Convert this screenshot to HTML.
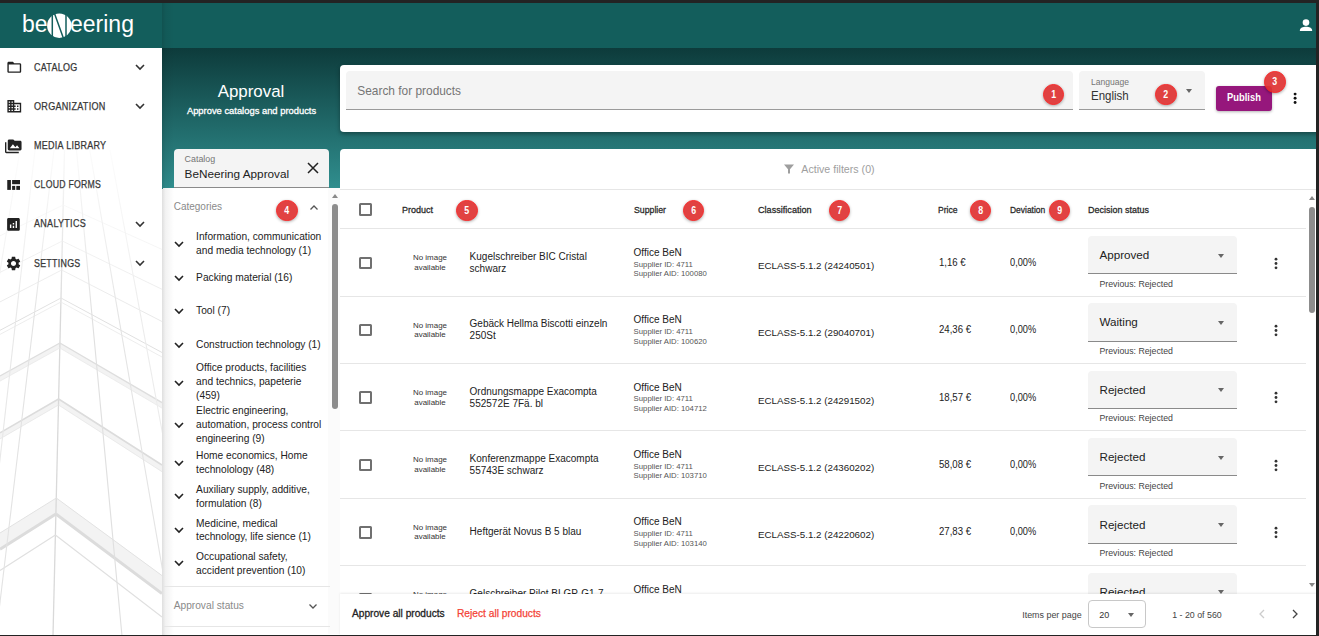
<!DOCTYPE html><html><head><meta charset="utf-8"><style>
*{box-sizing:border-box}
html,body{margin:0;padding:0;width:1319px;height:636px;overflow:hidden;background:#232323;font-family:"Liberation Sans",sans-serif}
#app{position:absolute;left:0;top:0;width:1316px;height:634.6px;overflow:hidden;background:#fff}
.t{position:absolute;white-space:nowrap}
.ic{position:absolute;line-height:0}
#hdr{position:absolute;left:0;top:0;width:1316px;height:48px;background:#135e5c;border-top:3px solid #232323}
#side{position:absolute;left:0;top:48px;width:162px;height:590px;background:#fff}
#sideedge{position:absolute;left:162px;top:3px;width:12px;height:632px;background:linear-gradient(to right,rgba(0,0,0,.13),rgba(0,0,0,.05) 30%,rgba(0,0,0,0))}
#grad{position:absolute;left:162px;top:48px;width:1154px;height:141px;background:linear-gradient(to bottom,#0d3b3b 0%,#308f8f 100%)}
#scard{position:absolute;left:340.3px;top:64.8px;width:990px;height:67px;background:#fff;border-radius:4px;box-shadow:0 2px 4px rgba(0,0,0,.35)}
.fill{position:absolute;background:#f4f4f4;border-radius:4px 4px 0 0;border-bottom:1px solid #9a9a9a}
.tri{position:absolute;width:0;height:0;border-left:3.6px solid transparent;border-right:3.6px solid transparent;border-top:4.2px solid #666}
#publish{position:absolute;left:1215.9px;top:85.8px;width:56.4px;height:25.1px;background:#96177c;border-radius:3px;box-shadow:0 1px 3px rgba(0,0,0,.3)}
.dot{position:absolute;width:2.8px;height:2.8px;border-radius:50%;background:#111}
.badge{position:absolute;border-radius:50%;background:#df3434;box-shadow:0 1px 3px rgba(0,0,0,.35);border:1.3px solid #fb1c1c;opacity:.93}
.badge span{position:absolute;left:0;right:0;top:3px;text-align:center;color:#fff;font-size:11px;line-height:13px;font-weight:bold;transform:scaleX(0.8)}
#lower{position:absolute;left:163px;top:188px;width:1153px;height:446px;background:#fff}
#fcard{position:absolute;left:340.3px;top:148.6px;width:980px;height:41px;background:#fff;border-radius:4px 4px 0 0}
.hline{position:absolute;height:1px;background:#e6e6e6}
.cb{position:absolute;width:12.5px;height:12.5px;border:2px solid #707070;border-radius:1.5px}
.stri{position:absolute;width:0;height:0;border-left:3.6px solid transparent;border-right:3.6px solid transparent;border-bottom:4.5px solid #888;margin-left:0}
.stri.dn{border-bottom:0;border-top:4.5px solid #888}
.thumb{position:absolute;background:#8c8c8c;border-radius:3px}
#rows{position:absolute;left:340.3px;top:189px;width:966px;height:405px;overflow:hidden}
#foot{position:absolute;left:340.3px;top:594px;width:976px;height:42px;background:#fff;box-shadow:0 -1px 2px rgba(0,0,0,.08)}
#ipp{position:absolute;left:1087.5px;top:600.2px;width:58.8px;height:28.3px;border:1px solid #c8c8c8;border-radius:4px}
</style></head><body><div id="app"><div id="hdr"></div>
<svg id="logo" width="130" height="34" viewBox="0 0 130 34" style="position:absolute;left:15px;top:8px">
<text x="7" y="24.1" font-family="Liberation Sans" font-size="23" fill="#fff">be</text>
<circle cx="44.3" cy="17.7" r="12.2" fill="#fff"/>
<path d="M37.3 6 V30 M39.5 5.5 L48.5 30.5 M51 6 V30" stroke="#135e5c" stroke-width="1.5" fill="none"/>
<text x="55" y="24.1" font-family="Liberation Sans" font-size="23" fill="#fff">eering</text>
</svg>
<svg width="16" height="16" viewBox="0 0 16 16" style="position:absolute;left:1298px;top:17px">
<circle cx="8" cy="5.6" r="3.3" fill="#fff"/>
<path d="M1.8 14 C1.8 10.6 5 9.8 8 9.8 C11 9.8 14.2 10.6 14.2 14 Z" fill="#fff"/>
</svg>
<div id="side"></div>
<svg style="position:absolute;left:0;top:48px" width="162" height="590" viewBox="0 48 162 590"><g fill="none"><path d="M56.3 498 L162 575.6 L162 593.5 L55.9 514 L0 549.2 L0 533.0 Z" fill="#f3f3f3" stroke="none"/><path d="M58.6 399 L162 465.0 L162 471.7 L58.5 405 L0 438.9 L0 432.8 Z" fill="#f3f3f3" stroke="none"/><path d="M59.9 343 L162 402.6 L162 408.1 L59.8 348 L0 381.1 L0 376.0 Z" fill="#f3f3f3" stroke="none"/><path d="M64.5 150 L53 636" stroke="#d9d9d9" stroke-width="1.3"/><path d="M63.2 205 L0 235.8 M63.2 205 L162 249.4" stroke="#ececec" stroke-width="0.8"/><path d="M62.3 241 L0 272.4 M62.3 241 L162 289.3" stroke="#e6e6e6" stroke-width="0.8"/><path d="M61.7 270 L0 301.9 M61.7 270 L162 321.5" stroke="#e6e6e6" stroke-width="0.9"/><path d="M61.0 298 L0 330.3 M61.0 298 L162 352.5" stroke="#e0e0e0" stroke-width="1"/><path d="M60.9 302 L0 334.4 M60.9 302 L162 357.0" stroke="#e8e8e8" stroke-width="0.8"/><path d="M59.9 343 L0 376.0 M59.9 343 L162 402.6" stroke="#dedede" stroke-width="1.4"/><path d="M59.8 348 L0 381.1 M59.8 348 L162 408.1" stroke="#e8e8e8" stroke-width="0.8"/><path d="M58.6 399 L0 432.8 M58.6 399 L162 465.0" stroke="#dcdcdc" stroke-width="1.6"/><path d="M58.5 405 L0 438.9 M58.5 405 L162 471.7" stroke="#e6e6e6" stroke-width="0.8"/><path d="M56.3 498 L0 533.0 M56.3 498 L162 575.6" stroke="#e2e2e2" stroke-width="1"/><path d="M55.9 514 L0 549.2 M55.9 514 L162 593.5" stroke="#dcdcdc" stroke-width="3"/><path d="M55.4 535 L0 570.4 M55.4 535 L162 617.1" stroke="#e0e0e0" stroke-width="1.2"/><path d="M54 150 L-4 636" stroke="#e3e3e3" stroke-width="1.1"/><path d="M35 150 L-20 636" stroke="#e8e8e8" stroke-width="1.1"/><path d="M76.5 150 L122 636" stroke="#e0e0e0" stroke-width="1.1"/><path d="M89.7 150 L174 636" stroke="#e4e4e4" stroke-width="1.1"/><path d="M110 150 L200 636" stroke="#ececec" stroke-width="1.1"/><path d="M20 150 L-60 636" stroke="#eeeeee" stroke-width="1.1"/></g></svg>
<div style="position:absolute;left:0;top:140px;width:162px;height:180px;background:linear-gradient(to bottom,rgba(255,255,255,.9),rgba(255,255,255,0))"></div>
<div class="ic" style="left:5.52px;top:59.14px"><svg width="16.56" height="16.56" viewBox="0 0 24 24"><path fill="#222" d="M20 6h-8l-2-2H4c-1.1 0-1.99.9-1.99 2L2 18c0 1.1.9 2 2 2h16c1.1 0 2-.9 2-2V8c0-1.1-.9-2-2-2zm0 12H4V8h16v10z"/></svg></div>
<div class="t" style="left:33.70px;top:62px;font-size:10.0px;line-height:11px;color:#383838;transform:scaleX(0.899);transform-origin:left center;letter-spacing:0.3px;-webkit-text-stroke:0.25px #383838;">CATALOG</div>
<div class="ic" style="left:133.7px;top:60.70px"><svg width="12" height="12" viewBox="0 0 12 12"><path d="M2 4 L6 8 L10 4" stroke="#333" stroke-width="1.6" fill="none"/></svg></div>
<div class="ic" style="left:5.52px;top:98.03px"><svg width="16.56" height="16.56" viewBox="0 0 24 24"><path fill="#222" d="M12 7V3H2v18h20V7H12zM6 19H4v-2h2v2zm0-4H4v-2h2v2zm0-4H4V9h2v2zm0-4H4V5h2v2zm4 12H8v-2h2v2zm0-4H8v-2h2v2zm0-4H8V9h2v2zm0-4H8V5h2v2zm10 12h-8v-2h2v-2h-2v-2h2v-2h-2V9h8v10zm-2-8h-2v2h2v-2zm0 4h-2v2h2v-2z"/></svg></div>
<div class="t" style="left:33.70px;top:101px;font-size:10.0px;line-height:11px;color:#383838;transform:scaleX(0.907);transform-origin:left center;letter-spacing:0.3px;-webkit-text-stroke:0.25px #383838;">ORGANIZATION</div>
<div class="ic" style="left:133.7px;top:100.20px"><svg width="12" height="12" viewBox="0 0 12 12"><path d="M2 4 L6 8 L10 4" stroke="#333" stroke-width="1.6" fill="none"/></svg></div>
<div class="ic" style="left:5.2px;top:137.6px"><svg width="16.56" height="16.56" viewBox="0 0 24 24"><path fill="#222" d="M2 6H0v5h.01L0 20c0 1.1.9 2 2 2h18v-2H2V6zm20-2h-8l-2-2H6c-1.1 0-1.99.9-1.99 2L4 16c0 1.1.9 2 2 2h16c1.1 0 2-.9 2-2V6c0-1.1-.9-2-2-2zM7 15l4.5-6 3.5 4.51 2.5-3.01L21 15H7z"/></svg></div>
<div class="t" style="left:33.70px;top:140px;font-size:10.0px;line-height:11px;color:#383838;transform:scaleX(0.9);transform-origin:left center;letter-spacing:0.3px;-webkit-text-stroke:0.25px #383838;">MEDIA LIBRARY</div>
<svg style="position:absolute;left:0;top:0" width="30" height="200" viewBox="0 0 30 200"><g fill="#222"><rect x="7.25" y="180" width="3.65" height="9.9"/><rect x="12.1" y="180" width="7.9" height="4.2"/><rect x="12.1" y="185.9" width="3.1" height="4"/><rect x="16.3" y="185.9" width="3.7" height="4"/></g></svg>
<div class="t" style="left:33.70px;top:179px;font-size:10.0px;line-height:11px;color:#383838;transform:scaleX(0.869);transform-origin:left center;letter-spacing:0.3px;-webkit-text-stroke:0.25px #383838;">CLOUD FORMS</div>
<div class="ic" style="left:5.1px;top:215.9px"><svg width="16.92" height="16.92" viewBox="0 0 24 24"><path fill="#222" d="M19 3H5c-1.1 0-2 .9-2 2v14c0 1.1.9 2 2 2h14c1.1 0 2-.9 2-2V5c0-1.1-.9-2-2-2zM9 17H7v-5h2v5zm4 0h-2v-3h2v3zm0-5h-2v-2h2v2zm4 5h-2V7h2v10z"/></svg></div>
<div class="t" style="left:33.70px;top:218px;font-size:10.0px;line-height:11px;color:#383838;transform:scaleX(0.904);transform-origin:left center;letter-spacing:0.3px;-webkit-text-stroke:0.25px #383838;">ANALYTICS</div>
<div class="ic" style="left:133.7px;top:218.00px"><svg width="12" height="12" viewBox="0 0 12 12"><path d="M2 4 L6 8 L10 4" stroke="#333" stroke-width="1.6" fill="none"/></svg></div>
<div class="ic" style="left:5.08px;top:255.1px"><svg width="17.04" height="17.04" viewBox="0 0 24 24"><path fill="#222" d="M19.14 12.94c.04-.3.06-.61.06-.94 0-.32-.02-.64-.07-.94l2.03-1.58c.18-.14.23-.41.12-.61l-1.92-3.32c-.12-.22-.37-.29-.59-.22l-2.39.96c-.5-.38-1.03-.7-1.62-.94l-.36-2.54c-.04-.24-.24-.41-.48-.41h-3.84c-.24 0-.43.17-.47.41l-.36 2.54c-.59.24-1.13.57-1.62.94l-2.39-.96c-.22-.08-.47 0-.59.22L2.74 8.87c-.12.21-.08.47.12.61l2.03 1.58c-.05.3-.09.63-.09.94s.02.64.07.94l-2.03 1.58c-.18.14-.23.41-.12.61l1.92 3.32c.12.22.37.29.59.22l2.39-.96c.5.38 1.03.7 1.62.94l.36 2.54c.05.24.24.41.48.41h3.84c.24 0 .44-.17.47-.41l.36-2.54c.59-.24 1.13-.56 1.62-.94l2.39.96c.22.08.47 0 .59-.22l1.92-3.32c.12-.22.07-.47-.12-.61l-2.01-1.58zM12 15.6c-1.98 0-3.6-1.62-3.6-3.6s1.62-3.6 3.6-3.6 3.6 1.62 3.6 3.6-1.62 3.6-3.6 3.6z"/></svg></div>
<div class="t" style="left:33.70px;top:258px;font-size:10.0px;line-height:11px;color:#383838;transform:scaleX(0.887);transform-origin:left center;letter-spacing:0.3px;-webkit-text-stroke:0.25px #383838;">SETTINGS</div>
<div class="ic" style="left:133.7px;top:257.40px"><svg width="12" height="12" viewBox="0 0 12 12"><path d="M2 4 L6 8 L10 4" stroke="#333" stroke-width="1.6" fill="none"/></svg></div>
<div id="grad"></div>
<div class="t" style="left:171.00px;width:160px;text-align:center;top:82px;font-size:16.9px;line-height:19px;color:#fff;">Approval</div>
<div class="t" style="left:171.50px;width:160px;text-align:center;top:105px;font-size:9.4px;line-height:11px;color:#fff;-webkit-text-stroke:0.3px #fff;">Approve catalogs and products</div>
<div id="scard"></div>
<div class="fill" style="left:346px;top:71.2px;width:727.2px;height:38.4px"></div>
<div class="t" style="left:357.30px;top:84px;font-size:11.9px;line-height:14px;color:#757575;">Search for products</div>
<div class="fill" style="left:1079.3px;top:71.2px;width:125.4px;height:38.4px"></div>
<div class="t" style="left:1090.60px;top:76px;font-size:9.4px;line-height:11px;color:#757575;transform:scaleX(0.913);transform-origin:left center;">Language</div>
<div class="t" style="left:1090.60px;top:89px;font-size:12.4px;line-height:14px;color:#333;transform:scaleX(0.927);transform-origin:left center;">English</div>
<div class="tri" style="left:1186.4px;top:89px"></div>
<div id="publish"></div>
<div class="t" style="left:1216.10px;width:56px;text-align:center;top:92px;font-size:10.2px;line-height:11px;color:#fff;font-weight:bold;transform:scaleX(0.918);transform-origin:center center;">Publish</div>
<svg style="position:absolute;left:1290px;top:88px" width="10" height="20" viewBox="1290 88 10 20"><g fill="#111"><circle cx="1295.1" cy="94.1" r="1.45"/><circle cx="1295.1" cy="98.3" r="1.45"/><circle cx="1295.1" cy="102.5" r="1.45"/></g></svg>
<div class="badge" style="left:1042.95px;top:83.85px;width:21.5px;height:21.5px"><span>1</span></div>
<div class="badge" style="left:1155.25px;top:83.85px;width:21.5px;height:21.5px"><span>2</span></div>
<div class="badge" style="left:1264.05px;top:71.35px;width:21.5px;height:21.5px"><span>3</span></div>
<div class="fill" style="left:173.7px;top:148.9px;width:155.5px;height:39.1px;border-bottom:1px solid #8a8a8a"></div>
<div class="t" style="left:184.60px;top:154px;font-size:8.9px;line-height:10px;color:#757575;">Catalog</div>
<div class="t" style="left:184.60px;top:167px;font-size:11.75px;line-height:13px;color:#222;">BeNeering Approval</div>
<svg width="12" height="12" viewBox="0 0 12 12" style="position:absolute;left:306.5px;top:162.3px"><path d="M1 1 L11 11 M11 1 L1 11" stroke="#222" stroke-width="1.5"/></svg>
<div id="lower"></div>
<div style="position:absolute;left:327.5px;top:188px;width:12.8px;height:446px;background:#fbfbfb"></div>
<div id="sideedge"></div>
<div id="fcard"></div>
<svg width="10" height="10" viewBox="0 0 10 10" style="position:absolute;left:784.3px;top:164px"><path d="M0 0.5 H10 L6 5.2 V9.5 L4 9.5 V5.2 Z" fill="#9e9e9e"/></svg>
<div class="t" style="left:801.30px;top:163px;font-size:10.65px;line-height:12px;color:#9e9e9e;">Active filters (0)</div>
<div class="t" style="left:173.70px;top:201px;font-size:10.0px;line-height:11px;color:#8a8a8a;">Categories</div>
<svg width="10" height="7" viewBox="0 0 10 7" style="position:absolute;left:308.5px;top:204px"><path d="M1.5 5.5 L5 2 L8.5 5.5" stroke="#555" stroke-width="1.3" fill="none"/></svg>
<div class="badge" style="left:276.25px;top:199.55px;width:21.5px;height:21.5px"><span>4</span></div>
<div class="ic" style="left:174.2px;top:239.60px"><svg width="10" height="8" viewBox="0 0 10 8"><path d="M1 2 L5 6 L9 2" stroke="#222" stroke-width="1.6" fill="none"/></svg></div>
<div class="t" style="left:196.10px;top:231px;font-size:10.2px;line-height:11px;color:#222;">Information, communication</div>
<div class="t" style="left:196.10px;top:245px;font-size:10.2px;line-height:11px;color:#222;">and media technology (1)</div>
<div class="ic" style="left:174.2px;top:273.60px"><svg width="10" height="8" viewBox="0 0 10 8"><path d="M1 2 L5 6 L9 2" stroke="#222" stroke-width="1.6" fill="none"/></svg></div>
<div class="t" style="left:196.10px;top:272px;font-size:10.2px;line-height:11px;color:#222;">Packing material (16)</div>
<div class="ic" style="left:174.2px;top:306.90px"><svg width="10" height="8" viewBox="0 0 10 8"><path d="M1 2 L5 6 L9 2" stroke="#222" stroke-width="1.6" fill="none"/></svg></div>
<div class="t" style="left:196.10px;top:305px;font-size:10.2px;line-height:11px;color:#222;">Tool (7)</div>
<div class="ic" style="left:174.2px;top:340.50px"><svg width="10" height="8" viewBox="0 0 10 8"><path d="M1 2 L5 6 L9 2" stroke="#222" stroke-width="1.6" fill="none"/></svg></div>
<div class="t" style="left:196.10px;top:339px;font-size:10.2px;line-height:11px;color:#222;">Construction technology (1)</div>
<div class="ic" style="left:174.2px;top:379.00px"><svg width="10" height="8" viewBox="0 0 10 8"><path d="M1 2 L5 6 L9 2" stroke="#222" stroke-width="1.6" fill="none"/></svg></div>
<div class="t" style="left:196.10px;top:362px;font-size:10.2px;line-height:11px;color:#222;">Office products, facilities</div>
<div class="t" style="left:196.10px;top:376px;font-size:10.2px;line-height:11px;color:#222;">and technics, papeterie</div>
<div class="t" style="left:196.10px;top:390px;font-size:10.2px;line-height:11px;color:#222;">(459)</div>
<div class="ic" style="left:174.2px;top:420.60px"><svg width="10" height="8" viewBox="0 0 10 8"><path d="M1 2 L5 6 L9 2" stroke="#222" stroke-width="1.6" fill="none"/></svg></div>
<div class="t" style="left:196.10px;top:405px;font-size:10.2px;line-height:11px;color:#222;">Electric engineering,</div>
<div class="t" style="left:196.10px;top:419px;font-size:10.2px;line-height:11px;color:#222;">automation, process control</div>
<div class="t" style="left:196.10px;top:433px;font-size:10.2px;line-height:11px;color:#222;">engineering (9)</div>
<div class="ic" style="left:174.2px;top:458.50px"><svg width="10" height="8" viewBox="0 0 10 8"><path d="M1 2 L5 6 L9 2" stroke="#222" stroke-width="1.6" fill="none"/></svg></div>
<div class="t" style="left:196.10px;top:450px;font-size:10.2px;line-height:11px;color:#222;">Home economics, Home</div>
<div class="t" style="left:196.10px;top:464px;font-size:10.2px;line-height:11px;color:#222;">technolology (48)</div>
<div class="ic" style="left:174.2px;top:492.40px"><svg width="10" height="8" viewBox="0 0 10 8"><path d="M1 2 L5 6 L9 2" stroke="#222" stroke-width="1.6" fill="none"/></svg></div>
<div class="t" style="left:196.10px;top:484px;font-size:10.2px;line-height:11px;color:#222;">Auxiliary supply, additive,</div>
<div class="t" style="left:196.10px;top:498px;font-size:10.2px;line-height:11px;color:#222;">formulation (8)</div>
<div class="ic" style="left:174.2px;top:525.90px"><svg width="10" height="8" viewBox="0 0 10 8"><path d="M1 2 L5 6 L9 2" stroke="#222" stroke-width="1.6" fill="none"/></svg></div>
<div class="t" style="left:196.10px;top:518px;font-size:10.2px;line-height:11px;color:#222;">Medicine, medical</div>
<div class="t" style="left:196.10px;top:531px;font-size:10.2px;line-height:11px;color:#222;">technology, life sience (1)</div>
<div class="ic" style="left:174.2px;top:559.20px"><svg width="10" height="8" viewBox="0 0 10 8"><path d="M1 2 L5 6 L9 2" stroke="#222" stroke-width="1.6" fill="none"/></svg></div>
<div class="t" style="left:196.10px;top:551px;font-size:10.2px;line-height:11px;color:#222;">Occupational safety,</div>
<div class="t" style="left:196.10px;top:565px;font-size:10.2px;line-height:11px;color:#222;">accident prevention (10)</div>
<div class="hline" style="left:163px;top:586px;width:167px"></div>
<div class="t" style="left:173.70px;top:600px;font-size:10.2px;line-height:11px;color:#8a8a8a;">Approval status</div>
<svg width="10" height="7" viewBox="0 0 10 7" style="position:absolute;left:308px;top:603px"><path d="M1.5 1.5 L5 5 L8.5 1.5" stroke="#555" stroke-width="1.3" fill="none"/></svg>
<div class="hline" style="left:163px;top:626px;width:167px"></div>
<div class="stri" style="left:331.6px;top:193.5px"></div>
<div class="thumb" style="left:332px;top:204px;width:6px;height:205px"></div>
<div class="hline" style="left:340.3px;top:189px;width:975.7px"></div>
<div class="cb" style="left:359.3px;top:203.4px"></div>
<div class="t" style="left:402.00px;top:204px;font-size:9.9px;line-height:11px;color:#2a2a2a;transform:scaleX(0.909);transform-origin:left center;-webkit-text-stroke:0.3px #2a2a2a;">Product</div>
<div class="t" style="left:633.90px;top:204px;font-size:9.9px;line-height:11px;color:#2a2a2a;transform:scaleX(0.884);transform-origin:left center;-webkit-text-stroke:0.3px #2a2a2a;">Supplier</div>
<div class="t" style="left:757.90px;top:204px;font-size:9.9px;line-height:11px;color:#2a2a2a;transform:scaleX(0.922);transform-origin:left center;-webkit-text-stroke:0.3px #2a2a2a;">Classification</div>
<div class="t" style="left:937.90px;top:204px;font-size:9.9px;line-height:11px;color:#2a2a2a;transform:scaleX(0.869);transform-origin:left center;-webkit-text-stroke:0.3px #2a2a2a;">Price</div>
<div class="t" style="left:1009.60px;top:204px;font-size:9.9px;line-height:11px;color:#2a2a2a;transform:scaleX(0.855);transform-origin:left center;-webkit-text-stroke:0.3px #2a2a2a;">Deviation</div>
<div class="t" style="left:1088.20px;top:204px;font-size:9.9px;line-height:11px;color:#2a2a2a;transform:scaleX(0.909);transform-origin:left center;-webkit-text-stroke:0.3px #2a2a2a;">Decision status</div>
<div class="badge" style="left:456.25px;top:199.75px;width:21.5px;height:21.5px"><span>5</span></div>
<div class="badge" style="left:682.75px;top:199.75px;width:21.5px;height:21.5px"><span>6</span></div>
<div class="badge" style="left:828.65px;top:199.75px;width:21.5px;height:21.5px"><span>7</span></div>
<div class="badge" style="left:969.55px;top:199.75px;width:21.5px;height:21.5px"><span>8</span></div>
<div class="badge" style="left:1048.75px;top:199.75px;width:21.5px;height:21.5px"><span>9</span></div>
<div id="rows">
<div class="hline" style="left:0px;top:39.20px;width:966px"></div>
<div class="cb" style="left:19.0px;top:67.60px"></div>
<div class="t" style="left:59.70px;width:60px;text-align:center;top:64px;font-size:7.95px;line-height:9px;color:#333;">No image</div>
<div class="t" style="left:59.70px;width:60px;text-align:center;top:74px;font-size:7.95px;line-height:9px;color:#333;">available</div>
<div class="t" style="left:129.30px;top:62px;font-size:10.0px;line-height:11px;color:#222;">Kugelschreiber BIC Cristal</div>
<div class="t" style="left:129.30px;top:74px;font-size:10.0px;line-height:11px;color:#222;">schwarz</div>
<div class="t" style="left:293.30px;top:58px;font-size:10.0px;line-height:11px;color:#222;">Office BeN</div>
<div class="t" style="left:293.30px;top:71px;font-size:7.75px;line-height:9px;color:#555;">Supplier ID: 4711</div>
<div class="t" style="left:293.30px;top:80px;font-size:7.75px;line-height:9px;color:#555;">Supplier AID: 100080</div>
<div class="t" style="left:417.70px;top:71px;font-size:9.78px;line-height:11px;color:#222;">ECLASS-5.1.2 (24240501)</div>
<div class="t" style="left:598.40px;top:67px;font-size:10.5px;line-height:12px;color:#222;transform:scaleX(0.915);transform-origin:left center;">1,16 €</div>
<div class="t" style="left:669.50px;top:67px;font-size:10.5px;line-height:12px;color:#222;transform:scaleX(0.88);transform-origin:left center;">0,00%</div>
<div class="fill" style="left:747.80px;top:46.80px;width:148.5px;height:38.6px;border-bottom:1.2px solid #8a8a8a"></div>
<div class="t" style="left:759.20px;top:59px;font-size:11.63px;line-height:13px;color:#222;">Approved</div>
<div class="tri" style="left:878.10px;top:64.60px"></div>
<div class="t" style="left:759.20px;top:90px;font-size:8.76px;line-height:10px;color:#444;">Previous: Rejected</div>
<svg style="position:absolute;left:930.60px;top:61.70px" width="10" height="24" viewBox="-5 22 10 24"><g fill="#333"><circle cx="0" cy="30.2" r="1.4"/><circle cx="0" cy="34.5" r="1.4"/><circle cx="0" cy="38.8" r="1.4"/></g></svg>
<div class="hline" style="left:0px;top:106.55px;width:966px"></div>
<div class="cb" style="left:19.0px;top:134.95px"></div>
<div class="t" style="left:59.70px;width:60px;text-align:center;top:132px;font-size:7.95px;line-height:9px;color:#333;">No image</div>
<div class="t" style="left:59.70px;width:60px;text-align:center;top:141px;font-size:7.95px;line-height:9px;color:#333;">available</div>
<div class="t" style="left:129.30px;top:129px;font-size:10.0px;line-height:11px;color:#222;">Gebäck Hellma Biscotti einzeln</div>
<div class="t" style="left:129.30px;top:141px;font-size:10.0px;line-height:11px;color:#222;">250St</div>
<div class="t" style="left:293.30px;top:125px;font-size:10.0px;line-height:11px;color:#222;">Office BeN</div>
<div class="t" style="left:293.30px;top:138px;font-size:7.75px;line-height:9px;color:#555;">Supplier ID: 4711</div>
<div class="t" style="left:293.30px;top:148px;font-size:7.75px;line-height:9px;color:#555;">Supplier AID: 100620</div>
<div class="t" style="left:417.70px;top:138px;font-size:9.78px;line-height:11px;color:#222;">ECLASS-5.1.2 (29040701)</div>
<div class="t" style="left:598.40px;top:134px;font-size:10.5px;line-height:12px;color:#222;transform:scaleX(0.915);transform-origin:left center;">24,36 €</div>
<div class="t" style="left:669.50px;top:134px;font-size:10.5px;line-height:12px;color:#222;transform:scaleX(0.88);transform-origin:left center;">0,00%</div>
<div class="fill" style="left:747.80px;top:114.15px;width:148.5px;height:38.6px;border-bottom:1.2px solid #8a8a8a"></div>
<div class="t" style="left:759.20px;top:126px;font-size:11.63px;line-height:13px;color:#222;">Waiting</div>
<div class="tri" style="left:878.10px;top:131.95px"></div>
<div class="t" style="left:759.20px;top:157px;font-size:8.76px;line-height:10px;color:#444;">Previous: Rejected</div>
<svg style="position:absolute;left:930.60px;top:129.05px" width="10" height="24" viewBox="-5 22 10 24"><g fill="#333"><circle cx="0" cy="30.2" r="1.4"/><circle cx="0" cy="34.5" r="1.4"/><circle cx="0" cy="38.8" r="1.4"/></g></svg>
<div class="hline" style="left:0px;top:173.90px;width:966px"></div>
<div class="cb" style="left:19.0px;top:202.30px"></div>
<div class="t" style="left:59.70px;width:60px;text-align:center;top:199px;font-size:7.95px;line-height:9px;color:#333;">No image</div>
<div class="t" style="left:59.70px;width:60px;text-align:center;top:209px;font-size:7.95px;line-height:9px;color:#333;">available</div>
<div class="t" style="left:129.30px;top:197px;font-size:10.0px;line-height:11px;color:#222;">Ordnungsmappe Exacompta</div>
<div class="t" style="left:129.30px;top:209px;font-size:10.0px;line-height:11px;color:#222;">552572E 7Fä. bl</div>
<div class="t" style="left:293.30px;top:193px;font-size:10.0px;line-height:11px;color:#222;">Office BeN</div>
<div class="t" style="left:293.30px;top:205px;font-size:7.75px;line-height:9px;color:#555;">Supplier ID: 4711</div>
<div class="t" style="left:293.30px;top:215px;font-size:7.75px;line-height:9px;color:#555;">Supplier AID: 104712</div>
<div class="t" style="left:417.70px;top:206px;font-size:9.78px;line-height:11px;color:#222;">ECLASS-5.1.2 (24291502)</div>
<div class="t" style="left:598.40px;top:202px;font-size:10.5px;line-height:12px;color:#222;transform:scaleX(0.915);transform-origin:left center;">18,57 €</div>
<div class="t" style="left:669.50px;top:202px;font-size:10.5px;line-height:12px;color:#222;transform:scaleX(0.88);transform-origin:left center;">0,00%</div>
<div class="fill" style="left:747.80px;top:181.50px;width:148.5px;height:38.6px;border-bottom:1.2px solid #8a8a8a"></div>
<div class="t" style="left:759.20px;top:194px;font-size:11.63px;line-height:13px;color:#222;">Rejected</div>
<div class="tri" style="left:878.10px;top:199.30px"></div>
<div class="t" style="left:759.20px;top:224px;font-size:8.76px;line-height:10px;color:#444;">Previous: Rejected</div>
<svg style="position:absolute;left:930.60px;top:196.40px" width="10" height="24" viewBox="-5 22 10 24"><g fill="#333"><circle cx="0" cy="30.2" r="1.4"/><circle cx="0" cy="34.5" r="1.4"/><circle cx="0" cy="38.8" r="1.4"/></g></svg>
<div class="hline" style="left:0px;top:241.25px;width:966px"></div>
<div class="cb" style="left:19.0px;top:269.65px"></div>
<div class="t" style="left:59.70px;width:60px;text-align:center;top:266px;font-size:7.95px;line-height:9px;color:#333;">No image</div>
<div class="t" style="left:59.70px;width:60px;text-align:center;top:276px;font-size:7.95px;line-height:9px;color:#333;">available</div>
<div class="t" style="left:129.30px;top:264px;font-size:10.0px;line-height:11px;color:#222;">Konferenzmappe Exacompta</div>
<div class="t" style="left:129.30px;top:276px;font-size:10.0px;line-height:11px;color:#222;">55743E schwarz</div>
<div class="t" style="left:293.30px;top:260px;font-size:10.0px;line-height:11px;color:#222;">Office BeN</div>
<div class="t" style="left:293.30px;top:273px;font-size:7.75px;line-height:9px;color:#555;">Supplier ID: 4711</div>
<div class="t" style="left:293.30px;top:282px;font-size:7.75px;line-height:9px;color:#555;">Supplier AID: 103710</div>
<div class="t" style="left:417.70px;top:273px;font-size:9.78px;line-height:11px;color:#222;">ECLASS-5.1.2 (24360202)</div>
<div class="t" style="left:598.40px;top:269px;font-size:10.5px;line-height:12px;color:#222;transform:scaleX(0.915);transform-origin:left center;">58,08 €</div>
<div class="t" style="left:669.50px;top:269px;font-size:10.5px;line-height:12px;color:#222;transform:scaleX(0.88);transform-origin:left center;">0,00%</div>
<div class="fill" style="left:747.80px;top:248.85px;width:148.5px;height:38.6px;border-bottom:1.2px solid #8a8a8a"></div>
<div class="t" style="left:759.20px;top:261px;font-size:11.63px;line-height:13px;color:#222;">Rejected</div>
<div class="tri" style="left:878.10px;top:266.65px"></div>
<div class="t" style="left:759.20px;top:292px;font-size:8.76px;line-height:10px;color:#444;">Previous: Rejected</div>
<svg style="position:absolute;left:930.60px;top:263.75px" width="10" height="24" viewBox="-5 22 10 24"><g fill="#333"><circle cx="0" cy="30.2" r="1.4"/><circle cx="0" cy="34.5" r="1.4"/><circle cx="0" cy="38.8" r="1.4"/></g></svg>
<div class="hline" style="left:0px;top:308.60px;width:966px"></div>
<div class="cb" style="left:19.0px;top:337.00px"></div>
<div class="t" style="left:59.70px;width:60px;text-align:center;top:334px;font-size:7.95px;line-height:9px;color:#333;">No image</div>
<div class="t" style="left:59.70px;width:60px;text-align:center;top:343px;font-size:7.95px;line-height:9px;color:#333;">available</div>
<div class="t" style="left:129.30px;top:337px;font-size:10.0px;line-height:11px;color:#222;">Heftgerät Novus B 5 blau</div>
<div class="t" style="left:293.30px;top:327px;font-size:10.0px;line-height:11px;color:#222;">Office BeN</div>
<div class="t" style="left:293.30px;top:340px;font-size:7.75px;line-height:9px;color:#555;">Supplier ID: 4711</div>
<div class="t" style="left:293.30px;top:350px;font-size:7.75px;line-height:9px;color:#555;">Supplier AID: 103140</div>
<div class="t" style="left:417.70px;top:340px;font-size:9.78px;line-height:11px;color:#222;">ECLASS-5.1.2 (24220602)</div>
<div class="t" style="left:598.40px;top:336px;font-size:10.5px;line-height:12px;color:#222;transform:scaleX(0.915);transform-origin:left center;">27,83 €</div>
<div class="t" style="left:669.50px;top:336px;font-size:10.5px;line-height:12px;color:#222;transform:scaleX(0.88);transform-origin:left center;">0,00%</div>
<div class="fill" style="left:747.80px;top:316.20px;width:148.5px;height:38.6px;border-bottom:1.2px solid #8a8a8a"></div>
<div class="t" style="left:759.20px;top:329px;font-size:11.63px;line-height:13px;color:#222;">Rejected</div>
<div class="tri" style="left:878.10px;top:334.00px"></div>
<div class="t" style="left:759.20px;top:359px;font-size:8.76px;line-height:10px;color:#444;">Previous: Rejected</div>
<svg style="position:absolute;left:930.60px;top:331.10px" width="10" height="24" viewBox="-5 22 10 24"><g fill="#333"><circle cx="0" cy="30.2" r="1.4"/><circle cx="0" cy="34.5" r="1.4"/><circle cx="0" cy="38.8" r="1.4"/></g></svg>
<div class="hline" style="left:0px;top:375.95px;width:966px"></div>
<div class="cb" style="left:19.0px;top:404.35px"></div>
<div class="t" style="left:59.70px;width:60px;text-align:center;top:401px;font-size:7.95px;line-height:9px;color:#333;">No image</div>
<div class="t" style="left:59.70px;width:60px;text-align:center;top:411px;font-size:7.95px;line-height:9px;color:#333;">available</div>
<div class="t" style="left:129.30px;top:399px;font-size:10.0px;line-height:11px;color:#222;">Gelschreiber Pilot BLGP-G1-7</div>
<div class="t" style="left:129.30px;top:411px;font-size:10.0px;line-height:11px;color:#222;">schwarz</div>
<div class="t" style="left:293.30px;top:395px;font-size:10.0px;line-height:11px;color:#222;">Office BeN</div>
<div class="t" style="left:293.30px;top:407px;font-size:7.75px;line-height:9px;color:#555;">Supplier ID: 4711</div>
<div class="t" style="left:293.30px;top:417px;font-size:7.75px;line-height:9px;color:#555;">Supplier AID: 100080</div>
<div class="t" style="left:417.70px;top:408px;font-size:9.78px;line-height:11px;color:#222;">ECLASS-5.1.2 (24220602)</div>
<div class="t" style="left:598.40px;top:404px;font-size:10.5px;line-height:12px;color:#222;transform:scaleX(0.915);transform-origin:left center;">1,55 €</div>
<div class="t" style="left:669.50px;top:404px;font-size:10.5px;line-height:12px;color:#222;transform:scaleX(0.88);transform-origin:left center;">0,00%</div>
<div class="fill" style="left:747.80px;top:383.55px;width:148.5px;height:38.6px;border-bottom:1.2px solid #8a8a8a"></div>
<div class="t" style="left:759.20px;top:396px;font-size:11.63px;line-height:13px;color:#222;">Rejected</div>
<div class="tri" style="left:878.10px;top:401.35px"></div>
<div class="t" style="left:759.20px;top:426px;font-size:8.76px;line-height:10px;color:#444;">Previous: Rejected</div>
</div>
<div class="stri" style="left:1308.5px;top:195.5px"></div>
<div class="thumb" style="left:1308.8px;top:206.6px;width:6.2px;height:106.8px"></div>
<div class="stri dn" style="left:1308.5px;top:583px"></div>
<div id="foot"></div>
<div class="t" style="left:351.90px;top:607px;font-size:10.6px;line-height:12px;color:#222;transform:scaleX(0.959);transform-origin:left center;-webkit-text-stroke:0.3px #222;">Approve all products</div>
<div class="t" style="left:456.90px;top:607px;font-size:10.6px;line-height:12px;color:#f44336;transform:scaleX(0.962);transform-origin:left center;-webkit-text-stroke:0.25px #f44336;">Reject all products</div>
<div class="t" style="left:1022.20px;top:610px;font-size:8.92px;line-height:10px;color:#444;">Items per page</div>
<div id="ipp"></div>
<div class="t" style="left:1099.20px;top:610px;font-size:9.0px;line-height:10px;color:#333;">20</div>
<div class="tri" style="left:1128.2px;top:612.5px"></div>
<div class="t" style="left:1172.20px;top:610px;font-size:8.83px;line-height:10px;color:#444;">1 - 20 of 560</div>
<svg width="8" height="10" viewBox="0 0 8 10" style="position:absolute;left:1257.5px;top:609px"><path d="M6 1 L2 5 L6 9" stroke="#ccc" stroke-width="1.3" fill="none"/></svg>
<svg width="8" height="10" viewBox="0 0 8 10" style="position:absolute;left:1291px;top:609px"><path d="M2 1 L6 5 L2 9" stroke="#444" stroke-width="1.3" fill="none"/></svg></div></body></html>
